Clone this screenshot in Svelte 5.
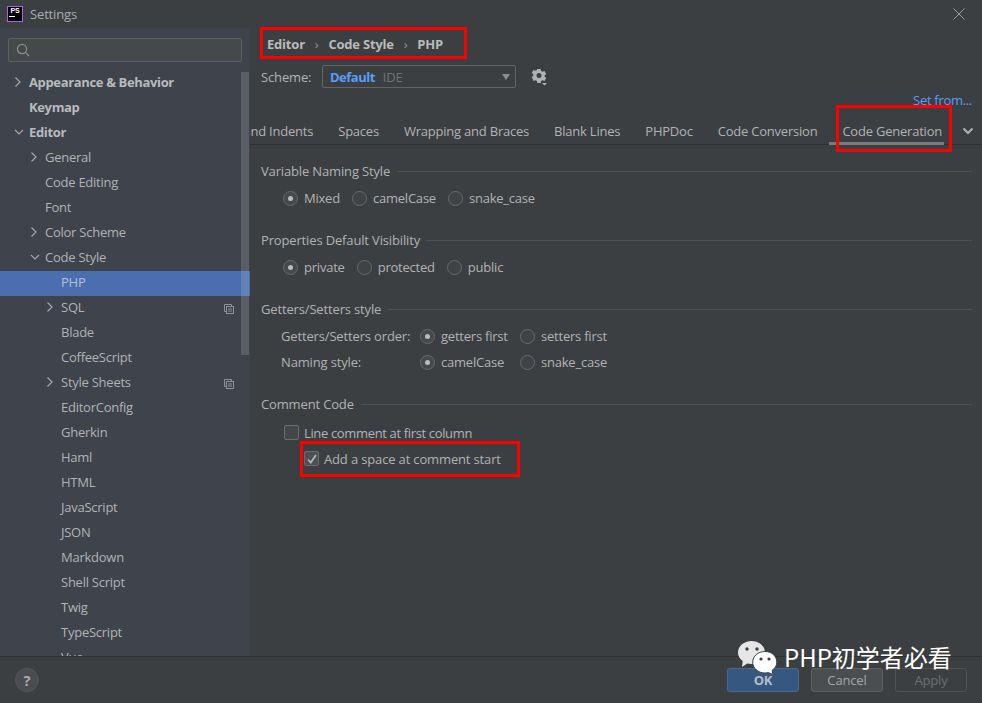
<script>
  const tree = [
    { label: 'Appearance & Behavior', depth: 0, bold: true, arrow: 'right' },
    { label: 'Keymap', depth: 0, bold: true },
    { label: 'Editor', depth: 0, bold: true, arrow: 'down' },
    { label: 'General', depth: 1, arrow: 'right' },
    { label: 'Code Editing', depth: 1 },
    { label: 'Font', depth: 1 },
    { label: 'Color Scheme', depth: 1, arrow: 'right' },
    { label: 'Code Style', depth: 1, arrow: 'down' },
    { label: 'PHP', depth: 2, selected: true },
    { label: 'SQL', depth: 2, arrow: 'right', copy: true },
    { label: 'Blade', depth: 2 },
    { label: 'CoffeeScript', depth: 2 },
    { label: 'Style Sheets', depth: 2, arrow: 'right', copy: true },
    { label: 'EditorConfig', depth: 2 },
    { label: 'Gherkin', depth: 2 },
    { label: 'Haml', depth: 2 },
    { label: 'HTML', depth: 2 },
    { label: 'JavaScript', depth: 2 },
    { label: 'JSON', depth: 2 },
    { label: 'Markdown', depth: 2 },
    { label: 'Shell Script', depth: 2 },
    { label: 'Twig', depth: 2 },
    { label: 'TypeScript', depth: 2 },
    { label: 'Vue', depth: 2 }
  ];
  const tabs = ['Tabs and Indents', 'Spaces', 'Wrapping and Braces', 'Blank Lines', 'PHPDoc', 'Code Conversion'];
</script>

{#snippet radio(label, on)}
  <span class="radio-item">
    <span class="radio" class:on></span>
    <span>{label}</span>
  </span>
{/snippet}

{#snippet heading(label)}
  <div class="heading"><span>{label}</span><i></i></div>
{/snippet}

<div class="window">
  <header class="titlebar">
    <span class="logo"><b>PS</b><i></i></span>
    <span class="title">Settings</span>
    <svg class="close" width="12" height="12" viewBox="0 0 12 12"><path d="M.5.5l11 11M11.500.5l-11 11" stroke="#9a9d9f" fill="none"/></svg>
  </header>

  <div class="body">
    <aside class="sidebar">
      <div class="search">
        <svg width="14" height="14" viewBox="0 0 14 14" fill="none" stroke="#8d9093" stroke-width="1.2"><circle cx="6" cy="6" r="4.6"/><path d="M9.400 9.400l3.800 3.800"/></svg>
      </div>
      <div class="tree">
        {#each tree as row}
          <div class="row depth{row.depth}" class:selected={row.selected} class:bold={row.bold}>
            {#if row.arrow === 'right'}
              <svg class="arrow" width="8" height="12" viewBox="0 0 8 12" fill="none" stroke="#a4a7a9" stroke-width="1.200"><path d="M1.500 1.500L6 6l-4.500 4.500"/></svg>
            {:else if row.arrow === 'down'}
              <svg class="arrow" width="10" height="12" viewBox="0 0 10 12" fill="none" stroke="#a4a7a9" stroke-width="1.200"><path d="M1 4l4 4 4-4"/></svg>
            {/if}
            <span>{row.label}</span>
            {#if row.copy}
              <svg class="copy" width="10" height="10" viewBox="0 0 10 10" fill="none" stroke="#8f9295"><path d="M2.500 7.500H.5v-7h7v2"/><rect x="2.500" y="2.500" width="7" height="7"/><path d="M4 5h4M4 7h4"/></svg>
            {/if}
          </div>
        {/each}
      </div>
      <div class="scrollbar"></div>
    </aside>

    <main class="content">
      <div class="crumbs">
        <span>Editor</span><em>›</em><span>Code Style</span><em>›</em><span>PHP</span>
      </div>
      <div class="scheme">
        <span class="scheme-label">Scheme:</span>
        <div class="combo">
          <b>Default</b><span>IDE</span>
          <i class="caret"></i>
        </div>
        <svg class="gear" width="18" height="18" viewBox="0 0 18 18">
          <path fill="#afb1b3" fill-rule="evenodd" d="M6.300 1h3.400l.4 2 1.500.8 1.900-.7 1.700 2.900-1.500 1.300v1.500l1.500 1.300-1.700 2.900-1.900-.7-1.500.8-.4 2H6.300l-.4-2-1.500-.8-1.900.7L.8 9.100l1.500-1.300V6.300L.8 5l1.700-2.900 1.900.7 1.500-.8zM8 5a2.500 2.500 0 100 5 2.500 2.500 0 000-5z"/>
          <path fill="#afb1b3" d="M11 15h5l-2.500 2.500z"/>
        </svg>
      </div>
      <div class="setfrom"><span>Set from...</span></div>

      <div class="tabs">
        <div class="tab-strip">
          {#each tabs as t}<span class="tab">{t}</span>{/each}
          <span class="tab active">Code Generation</span>
        </div>
        <svg class="more" width="12" height="8" viewBox="0 0 12 8" fill="none" stroke="#afb1b3" stroke-width="2"><path d="M1.500 1.500L6 6l4.500-4.500"/></svg>
      </div>

      <section class="sec first">
        {@render heading('Variable Naming Style')}
        <div class="radios">
          {@render radio('Mixed', true)}
          {@render radio('camelCase')}
          {@render radio('snake_case')}
        </div>
      </section>

      <section class="sec">
        {@render heading('Properties Default Visibility')}
        <div class="radios">
          {@render radio('private', true)}
          {@render radio('protected')}
          {@render radio('public')}
        </div>
      </section>

      <section class="sec tall">
        {@render heading('Getters/Setters style')}
        <div class="grid">
          <span>Getters/Setters order:</span>
          {@render radio('getters first', true)}
          {@render radio('setters first')}
          <span>Naming style:</span>
          {@render radio('camelCase', true)}
          {@render radio('snake_case')}
        </div>
      </section>

      <section class="sec">
        {@render heading('Comment Code')}
        <div class="check line">
          <span class="box"></span><span>Line comment at first column</span>
        </div>
        <div class="check add">
          <span class="box on">
            <svg width="10" height="10" viewBox="0 0 10 10" fill="none" stroke="#b4b6b8" stroke-width="1.800"><path d="M1 5.500L3.800 8.500 9 1"/></svg>
          </span><span>Add a space at comment start</span>
        </div>
      </section>
    </main>
  </div>

  <footer class="footer">
    <span class="help">?</span>
    <div class="buttons">
      <span class="btn ok">OK</span>
      <span class="btn">Cancel</span>
      <span class="btn off">Apply</span>
    </div>
  </footer>

  <!-- annotations drawn on top of the screenshot -->
  <div class="mark m1"></div>
  <div class="mark m2"></div>
  <div class="mark m3"></div>

  <div class="watermark">
    <svg width="40" height="34" viewBox="0 0 40 34">
      <path fill="#e6e6e6" d="M13.500 1C6 1 0 6.100 0 12.500c0 3.500 1.800 6.500 4.700 8.600L4 27l5.200-3.400c1.400.3 2.800.4 4.300.4C21 24 27 18.900 27 12.500S21 1 13.500 1z"/>
      <path fill="#fff" stroke="#3c3f41" d="M27 11.500c-6.800 0-12.300 4.700-12.300 10.700S20.200 33 27 33c1.200 0 2.300-.2 3.300-.4l4.700 2-.9-4.300c2.900-2 4.700-4.800 4.700-8.100 0-6-5-10.700-11.800-10.700z"/>
      <circle cx="9" cy="9" r="1.700" fill="#3c3f41"/><circle cx="19" cy="9" r="1.700" fill="#3c3f41"/>
      <circle cx="23" cy="19" r="1.600" fill="#3c3f41"/><circle cx="31" cy="19" r="1.600" fill="#3c3f41"/>
    </svg>
    <span>PHP初学者必看</span>
  </div>
</div>

<style>
  :global(body) {
    margin: 0;
    background: #3c3f41;
  }
  .window {
    position: relative;
    width: 982px;
    height: 703px;
    display: flex;
    flex-direction: column;
    overflow: hidden;
    background: #3c3f41;
    color: #b0b3b5;
    font: 13px "Open Sans", "Liberation Sans", sans-serif;
    letter-spacing: -0.15px;
  }
  .titlebar {
    height: 28px;
    flex: none;
    display: flex;
    align-items: center;
    padding: 0 17px 0 7px;
  }
  .logo {
    width: 14px;
    height: 14px;
    border: 1px solid #b05cf0;
    background: #000;
    color: #fff;
    display: flex;
    flex-direction: column;
    align-items: center;
    font: 700 7px/8px "Liberation Sans", sans-serif;
  }
  .logo b {
    height: 9px;
  }
  .logo i {
    width: 6px;
    height: 1px;
    background: #fff;
    margin: 0 6px 0 0;
  }
  .title {
    margin-left: 7px;
    flex: 1;
    color: #a9acae;
  }
  .body {
    flex: 1;
    display: flex;
    min-height: 0;
  }
  .sidebar {
    position: relative;
    z-index: 1;
    width: 250px;
    flex: none;
    background: #3e434c;
    overflow: hidden;
  }
  .search {
    margin: 10px 8px 8px;
    height: 22px;
    border: 1px solid #5e6060;
    border-radius: 2px;
    background: #45494a;
    display: flex;
    align-items: center;
    padding-left: 7px;
  }
  .tree {
    padding-top: 1px;
    letter-spacing: -0.25px;
  }
  .row {
    height: 25px;
    box-sizing: border-box;
    padding-bottom: 3px;
    display: flex;
    align-items: center;
    position: relative;
  }
  .row.bold {
    font-weight: 700;
    letter-spacing: -0.35px;
    color: #b8bbbd;
  }
  .depth0 { padding-left: 29px; }
  .depth1 { padding-left: 45px; }
  .depth2 { padding-left: 61px; }
  .row.selected {
    background: #4b6eaf;
    color: #b4c0d6;
  }
  .arrow {
    position: absolute;
    margin-left: -15px;
  }
  .copy {
    position: absolute;
    left: 224px;
    top: 8px;
  }
  .scrollbar {
    position: absolute;
    left: 241px;
    top: 44px;
    width: 8px;
    height: 283px;
    background: rgba(255, 255, 255, 0.14);
  }
  .content {
    flex: 1;
    min-width: 0;
    padding: 0 10px 0 11px;
  }
  .crumbs {
    height: 32px;
    display: flex;
    align-items: center;
    padding-left: 6px;
    font-weight: 700;
    letter-spacing: -0.2px;
    color: #b8bbbd;
  }
  .crumbs em {
    width: 23.500px;
    text-align: center;
    font-style: normal;
    font-weight: 400;
    color: #8f9294;
  }
  .scheme {
    height: 23px;
    margin-top: 5px;
    display: flex;
    align-items: center;
  }
  .scheme-label {
    width: 61px;
  }
  .combo {
    position: relative;
    width: 185px;
    height: 21px;
    border: 1px solid #646464;
    border-radius: 2px;
    display: flex;
    align-items: center;
    padding-left: 7px;
    gap: 8px;
  }
  .combo b {
    color: #589df6;
    letter-spacing: -0.5px;
  }
  .combo span {
    color: #6f7274;
  }
  .caret {
    position: absolute;
    right: 5px;
    top: 8px;
    border: 4.500px solid transparent;
    border-top: 6px solid #8c8f91;
    border-bottom: 0;
  }
  .gear {
    margin-left: 15px;
  }
  .setfrom {
    height: 13px;
    margin-top: 6px;
    text-align: right;
    line-height: 13px;
    color: #589df6;
    letter-spacing: -0.3px;
  }
  .tabs {
    position: relative;
    height: 38px;
    margin: 0 -10px 0 -11px;
    border-bottom: 1px solid #2e3032;
    box-sizing: border-box;
  }
  .tab-strip {
    position: absolute;
    right: 38px;
    top: 0;
    display: flex;
    gap: 10px;
    white-space: nowrap;
    letter-spacing: -0.22px;
  }
  .tab {
    height: 38px;
    line-height: 48px;
    padding: 0 2px 0 13px;
    box-sizing: border-box;
  }
  .tab.active {
    border-bottom: 3px solid #787a7d;
  }
  .more {
    position: absolute;
    left: 712px;
    top: 20px;
  }
  .sec {
    height: 69px;
  }
  .sec.first {
    margin-top: 15px;
  }
  .sec.tall {
    height: 95px;
  }
  .heading {
    height: 22px;
    display: flex;
    align-items: center;
    gap: 7px;
  }
  .heading i {
    flex: 1;
    height: 1px;
    background: #4f5254;
  }
  .radios {
    display: flex;
    gap: 12px;
    padding: 4px 0 0 22px;
    height: 24px;
    align-items: center;
  }
  .radio-item {
    display: flex;
    align-items: center;
    gap: 6px;
    letter-spacing: -0.22px;
  }
  .radio {
    width: 13px;
    height: 13px;
    border: 1px solid #686a6c;
    border-radius: 50%;
    background: #404345;
    display: flex;
    align-items: center;
    justify-content: center;
  }
  .radio.on {
    background: #46494b;
  }
  .radio.on::after {
    content: "";
    width: 5px;
    height: 5px;
    border-radius: 50%;
    background: #b9bbbd;
  }
  .grid {
    display: grid;
    grid-template-columns: 139px 100px auto;
    grid-auto-rows: 26px;
    padding: 3px 0 0 20px;
    align-items: center;
  }
  .check {
    display: flex;
    align-items: center;
    gap: 5px;
    height: 27px;
  }
  .check.line {
    margin-top: 4px;
    padding-left: 23px;
    letter-spacing: -0.35px;
  }
  .check.add {
    padding-left: 43px;
    margin-top: -1px;
  }
  .box {
    width: 13px;
    height: 13px;
    border: 1px solid #6a6c6e;
    border-radius: 2px;
    background: #43474a;
    display: flex;
    align-items: center;
    justify-content: center;
  }
  .box.on {
    background: #4c5052;
  }
  .footer {
    height: 47px;
    flex: none;
    border-top: 1px solid #2e3032;
    box-sizing: border-box;
    display: flex;
    align-items: center;
    justify-content: space-between;
    padding: 0 15px 0 15px;
  }
  .help {
    width: 22px;
    height: 22px;
    border: 1px solid #55585a;
    border-radius: 50%;
    background: #4a4d4f;
    text-align: center;
    line-height: 22px;
    font-weight: 700;
    font-size: 15px;
    color: #a8abad;
  }
  .buttons {
    display: flex;
    gap: 12px;
  }
  .btn {
    width: 72px;
    height: 24px;
    box-sizing: border-box;
    border: 1px solid #5e6163;
    border-radius: 3px;
    background: #4a4e50;
    text-align: center;
    line-height: 22px;
    color: #a3a6a8;
  }
  .btn.ok {
    background: #365880;
    border-color: #46698f;
    font-weight: 700;
    color: #b4bec9;
  }
  .btn.off {
    background: transparent;
    border-color: #505254;
    color: #6b6e70;
  }
  .mark {
    position: absolute;
    z-index: 2;
    border: 3px solid #ff0000;
    box-sizing: border-box;
  }
  .m1 { left: 260px; top: 27px; width: 207px; height: 32px; }
  .m2 { left: 836px; top: 105px; width: 116px; height: 47px; }
  .m3 { left: 300px; top: 441px; width: 220px; height: 36px; }
  .watermark {
    position: absolute;
    z-index: 3;
    left: 738px;
    top: 640px;
    display: flex;
    align-items: center;
    gap: 6px;
    color: #fff;
    letter-spacing: 0;
    font: 24px "Noto Sans CJK SC", "Liberation Sans", sans-serif;
    line-height: 34px;
    white-space: nowrap;
  }
</style>
